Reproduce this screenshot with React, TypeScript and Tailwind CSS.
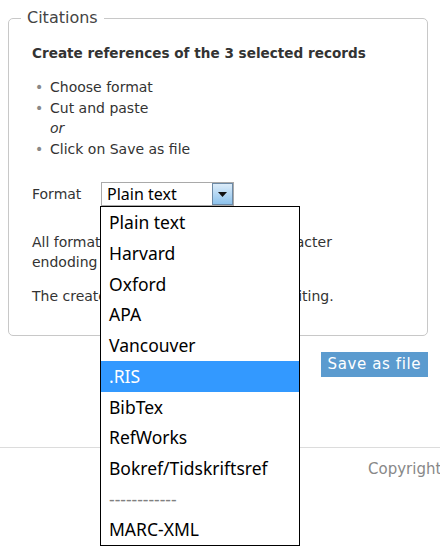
import React from "react";

const formats = [
  "Plain text",
  "Harvard",
  "Oxford",
  "APA",
  "Vancouver",
  ".RIS",
  "BibTex",
  "RefWorks",
  "Bokref/Tidskriftsref",
  "------------",
  "MARC-XML",
];

const App: React.FC = () => {
  const selected = ".RIS";

  return (
    <div className="w-[440px] h-[548px] overflow-hidden bg-white text-[#333] font-['DejaVu_Sans',Verdana,sans-serif] text-[14px]">
      <div className="px-2 pt-2">
        <fieldset className="border border-[#c8c8c8] rounded-[5px] mr-1 pl-[23px] pr-4 pb-[29px]">
          <legend className="ml-[-11px] px-[6px] text-[16px] leading-[20px] text-[#444]">
            Citations
          </legend>
          <h3 className="mt-[15px] font-bold text-[13.6px] leading-[20px] text-[#333]">
            Create references of the 3 selected records
          </h3>
          <ul className="mt-[14px] leading-[20.6px]">
            <li className="flex">
              <span className="w-[18px] pl-[3px] text-[#888]">•</span>
              Choose format
            </li>
            <li className="flex">
              <span className="w-[18px] pl-[3px] text-[#888]">•</span>
              Cut and paste
            </li>
            <li className="pl-[18px] italic">or</li>
            <li className="flex">
              <span className="w-[18px] pl-[3px] text-[#888]">•</span>
              Click on Save as file
            </li>
          </ul>
          <div className="mt-[23px] flex items-center h-[24px]">
            <span className="w-[69px] leading-[20px]">Format</span>
            <div className="relative">
              <div className="flex items-stretch w-[133px] h-[24px] border border-[#a9a9a9] bg-white font-['Noto_Sans',sans-serif] text-[16px] text-black">
                <span className="flex-1 pl-[5px] leading-[22px]">Plain text</span>
                <span className="w-[21px] border border-[#6d8aa6] bg-gradient-to-b from-[#dcecf9] to-[#8cc2ec] flex items-center justify-center">
                  <svg width="9" height="5" viewBox="0 0 9 5">
                    <path d="M0 0h9L4.5 5z" fill="#111" />
                  </svg>
                </span>
              </div>
              <ul className="absolute left-[-1px] top-[24px] z-10 w-[200px] border border-black bg-white font-['Noto_Sans',sans-serif] text-[17.5px] text-black">
                {formats.map((f) => (
                  <li
                    key={f}
                    className={
                      f === selected
                        ? "h-[30.7px] leading-[31.5px] pl-[8px] bg-[#3399ff] text-white"
                        : f.startsWith("-")
                        ? "h-[30.7px] leading-[31.5px] pl-[8px] text-[#808080]"
                        : "h-[30.7px] leading-[31.5px] pl-[8px]"
                    }
                  >
                    {f}
                  </li>
                ))}
              </ul>
            </div>
          </div>
          <p className="mt-[26px] leading-[20px] max-w-[310px]">
            All formats are saved with UTF-8 character endoding as text.
          </p>
          <p className="mt-[14px] leading-[20px]">
            The created references could need editing.
          </p>
        </fieldset>
        <div className="mt-[16px] mr-1 flex justify-end">
          <button className="h-[25px] px-[7px] bg-[#5b9bcf] text-white text-[15px] tracking-[0.6px] leading-[25px]">
            Save as file
          </button>
        </div>
      </div>
      <div className="mt-[70px] border-t border-[#dcdcdc]">
        <p className="pl-[368px] pt-[10px] whitespace-nowrap text-[15px] text-[#888]">
          Copyright
        </p>
      </div>
    </div>
  );
};

export default App;
